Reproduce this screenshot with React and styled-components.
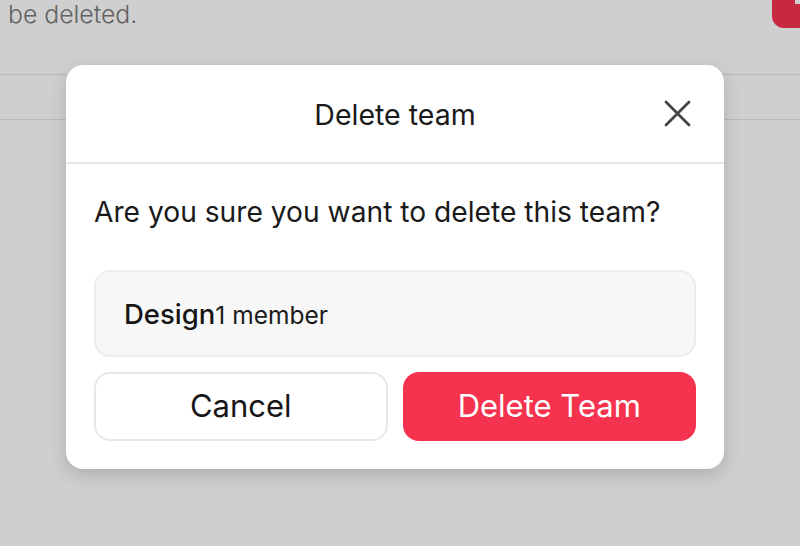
import React from "react";
import styled, { createGlobalStyle } from "styled-components";

const Global = createGlobalStyle`
  html, body { margin: 0; padding: 0; }
  body {
    width: 800px;
    height: 546px;
    overflow: hidden;
    background: #ffffff;
    font-family: Inter, "Noto Sans", "Liberation Sans", sans-serif;
  }
`;

const Page = styled.div`
  position: relative;
  width: 800px;
  height: 546px;
  overflow: hidden;
  background: #ffffff;
`;

const TopRow = styled.div`
  display: flex;
  justify-content: space-between;
  align-items: flex-start;
  height: 75px;
  border-bottom: 1px solid #e6e6e6;
  box-sizing: border-box;
  padding-left: 8px;
`;

const Note = styled.p`
  margin: 0;
  font-size: 24.8px;
  line-height: 29px;
  font-weight: 300;
  color: #7a7a7a;
`;

const DangerTab = styled.div`
  position: relative;
  width: 28px;
  height: 28px;
  background: #f5334e;
  border-radius: 0 0 0 12px;
  &::after {
    content: "";
    position: absolute;
    right: 0;
    top: 0;
    width: 5px;
    height: 4px;
    background: #ffffff;
  }
`;

const TableHead = styled.div`
  height: 44px;
  border-bottom: 1px solid #e6e6e6;
`;

const Overlay = styled.div`
  position: absolute;
  inset: 0;
  background: rgba(0, 0, 0, 0.19);
  display: flex;
  align-items: flex-start;
  padding: 65px 0 0 66px;
`;

const Dialog = styled.div`
  width: 658px;
  background: #ffffff;
  border-radius: 17px;
  box-shadow: 0 6px 18px rgba(0, 0, 0, 0.16);
  display: flex;
  flex-direction: column;
`;

const Header = styled.div`
  position: relative;
  height: 99px;
  display: flex;
  align-items: center;
  justify-content: center;
  border-bottom: 2px solid #e6e6e6;
  box-sizing: border-box;
`;

const Title = styled.h2`
  margin: 0;
  font-size: 28.5px;
  font-weight: 400;
  color: #1a1a1a;
  padding-top: 2px;
`;

const CloseButton = styled.button`
  position: absolute;
  right: 32px;
  top: 34px;
  width: 29px;
  height: 29px;
  padding: 0;
  border: none;
  background: transparent;
  display: flex;
  align-items: center;
  justify-content: center;
  cursor: pointer;
`;

const Body = styled.div`
  display: flex;
  flex-direction: column;
  padding: 28px 28px 28px;
`;

const Question = styled.p`
  margin: 0 0 38px;
  font-size: 28.2px;
  line-height: 40px;
  color: #1a1a1a;
`;

const TeamCard = styled.div`
  height: 87px;
  box-sizing: border-box;
  background: #f7f7f7;
  border: 2px solid #ececec;
  border-radius: 16px;
  display: flex;
  align-items: baseline;
  padding: 25px 28px 0;
  margin-bottom: 15px;
`;

const TeamName = styled.span`
  font-size: 27.5px;
  font-weight: 500;
  color: #161616;
`;

const MemberCount = styled.span`
  font-size: 24.5px;
  font-weight: 400;
  color: #1a1a1a;
`;

const Actions = styled.div`
  display: grid;
  grid-template-columns: 1fr 1fr;
  gap: 15px;
`;

const ActionButton = styled.button`
  height: 69px;
  box-sizing: border-box;
  border-radius: 16px;
  font-family: inherit;
  font-size: 31px;
  font-weight: 400;
  padding: 0 0 3px;
  border: 2px solid ${(p) => (p.$danger ? "#f5334e" : "#e8e8e8")};
  background: ${(p) => (p.$danger ? "#f5334e" : "#ffffff")};
  color: ${(p) => (p.$danger ? "#ffffff" : "#161616")};
  cursor: pointer;
`;

export default function App() {
  return (
    <>
      <Global />
      <Page>
        <TopRow>
          <Note>be deleted.</Note>
          <DangerTab />
        </TopRow>
        <TableHead />
        <Overlay>
          <Dialog role="dialog" aria-labelledby="dlg-title">
            <Header>
              <Title id="dlg-title">Delete team</Title>
              <CloseButton aria-label="Close">
                <svg width="29" height="29" viewBox="0 0 29 29" fill="none">
                  <path
                    d="M3 3 L26 26 M26 3 L3 26"
                    stroke="#444444"
                    strokeWidth="2.8"
                    strokeLinecap="round"
                  />
                </svg>
              </CloseButton>
            </Header>
            <Body>
              <Question>Are you sure you want to delete this team?</Question>
              <TeamCard>
                <TeamName>Design</TeamName>
                <MemberCount>1 member</MemberCount>
              </TeamCard>
              <Actions>
                <ActionButton>Cancel</ActionButton>
                <ActionButton $danger>Delete Team</ActionButton>
              </Actions>
            </Body>
          </Dialog>
        </Overlay>
      </Page>
    </>
  );
}
